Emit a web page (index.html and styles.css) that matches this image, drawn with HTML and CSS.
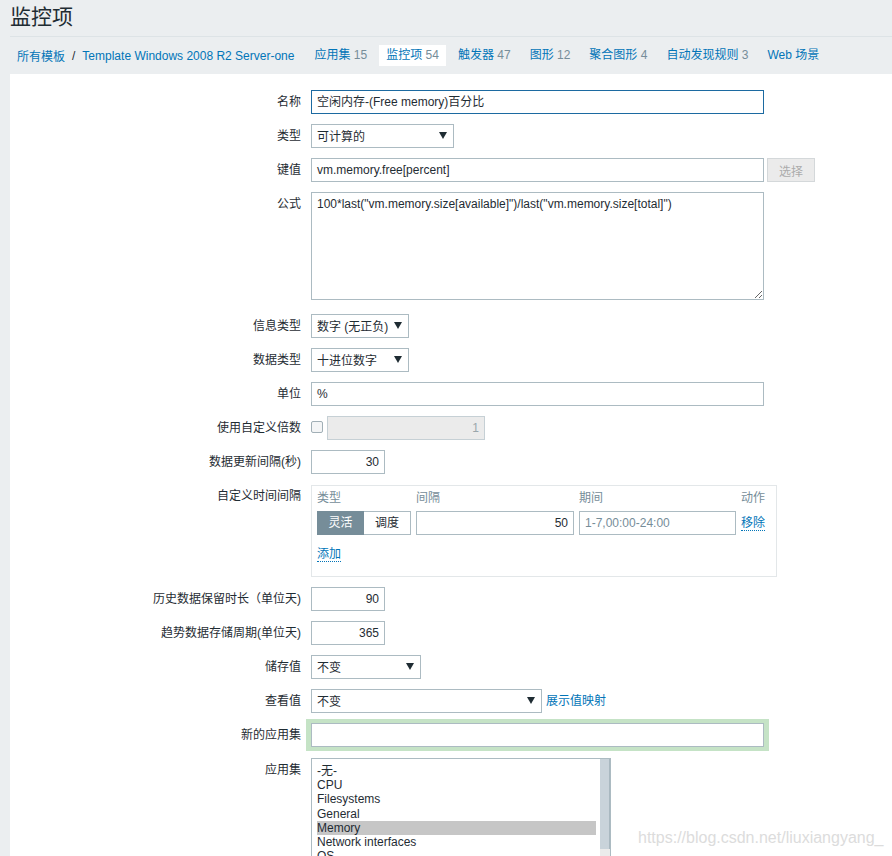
FILE: index.html
```html
<!DOCTYPE html>
<html lang="zh-CN">
<head>
<meta charset="utf-8">
<title>监控项</title>
<link rel="stylesheet" href="styles.css">
</head>
<body>
<div class="header">
  <h1 class="title">监控项</h1>
</div>
<div class="nav">
  <a class="link">所有模板</a><span class="sep">/</span><a class="link">Template Windows 2008 R2 Server-one</a>
  <ul class="tabs">
    <li><a class="link">应用集</a> <span class="count">15</span></li>
    <li class="active"><a class="link">监控项</a> <span class="count">54</span></li>
    <li><a class="link">触发器</a> <span class="count">47</span></li>
    <li><a class="link">图形</a> <span class="count">12</span></li>
    <li><a class="link">聚合图形</a> <span class="count">4</span></li>
    <li><a class="link">自动发现规则</a> <span class="count">3</span></li>
    <li><a class="link">Web 场景</a></li>
  </ul>
</div>
<div class="panel">
  <div class="form">
    <div class="row">
      <label class="lbl">名称</label>
      <div class="field"><div class="input wide focus">空闲内存-(Free memory)百分比</div></div>
    </div>
    <div class="row">
      <label class="lbl">类型</label>
      <div class="field"><div class="select w143"><span>可计算的</span><svg class="arrow" width="8" height="7" viewBox="0 0 8 7"><polygon points="0,0 8,0 4,7" fill="#1f2c33"/></svg></div></div>
    </div>
    <div class="row">
      <label class="lbl">键值</label>
      <div class="field"><div class="input wide">vm.memory.free[percent]</div><button class="btn-disabled">选择</button></div>
    </div>
    <div class="row">
      <label class="lbl">公式</label>
      <div class="field"><textarea class="textarea">100*last("vm.memory.size[available]")/last("vm.memory.size[total]")</textarea></div>
    </div>
    <div class="row">
      <label class="lbl">信息类型</label>
      <div class="field"><div class="select w98"><span>数字 (无正负)</span><svg class="arrow" width="8" height="7" viewBox="0 0 8 7"><polygon points="0,0 8,0 4,7" fill="#1f2c33"/></svg></div></div>
    </div>
    <div class="row">
      <label class="lbl">数据类型</label>
      <div class="field"><div class="select w98"><span>十进位数字</span><svg class="arrow" width="8" height="7" viewBox="0 0 8 7"><polygon points="0,0 8,0 4,7" fill="#1f2c33"/></svg></div></div>
    </div>
    <div class="row">
      <label class="lbl">单位</label>
      <div class="field"><div class="input wide">%</div></div>
    </div>
    <div class="row">
      <label class="lbl">使用自定义倍数</label>
      <div class="field"><span class="checkbox"></span><div class="input disabled num w158">1</div></div>
    </div>
    <div class="row">
      <label class="lbl">数据更新间隔(秒)</label>
      <div class="field"><div class="input num w74">30</div></div>
    </div>
    <div class="row row-box">
      <label class="lbl">自定义时间间隔</label>
      <div class="field">
        <div class="intervals">
          <div class="int-grid">
            <span class="th">类型</span><span class="th">间隔</span><span class="th">期间</span><span class="th">动作</span>
            <div class="seg"><span class="seg-on">灵活</span><span class="seg-off">调度</span></div>
            <div class="input num">50</div>
            <div class="input">1-7,00:00-24:00</div>
            <a class="link dotted">移除</a>
          </div>
          <a class="link dotted add">添加</a>
        </div>
      </div>
    </div>
    <div class="row">
      <label class="lbl">历史数据保留时长（单位天)</label>
      <div class="field"><div class="input num w74">90</div></div>
    </div>
    <div class="row">
      <label class="lbl">趋势数据存储周期(单位天)</label>
      <div class="field"><div class="input num w74">365</div></div>
    </div>
    <div class="row">
      <label class="lbl">储存值</label>
      <div class="field"><div class="select w110"><span>不变</span><svg class="arrow" width="8" height="7" viewBox="0 0 8 7"><polygon points="0,0 8,0 4,7" fill="#1f2c33"/></svg></div></div>
    </div>
    <div class="row">
      <label class="lbl">查看值</label>
      <div class="field"><div class="select w231"><span>不变</span><svg class="arrow" width="8" height="7" viewBox="0 0 8 7"><polygon points="0,0 8,0 4,7" fill="#1f2c33"/></svg></div><a class="link map-link">展示值映射</a></div>
    </div>
    <div class="row">
      <label class="lbl">新的应用集</label>
      <div class="field"><div class="highlight"><div class="input wide"></div></div></div>
    </div>
    <div class="row">
      <label class="lbl">应用集</label>
      <div class="field">
        <div class="listbox">
          <ul class="options">
            <li>-无-</li>
            <li>CPU</li>
            <li>Filesystems</li>
            <li>General</li>
            <li class="selected">Memory</li>
            <li>Network interfaces</li>
            <li>OS</li>
            <li>Processes</li>
          </ul>
          <div class="scrollbar"><div class="thumb"></div></div>
        </div>
      </div>
    </div>
  </div>
</div>
<div class="watermark">https://blog.csdn.net/liuxiangyang_</div>
</body>
</html>
```
FILE: styles.css
```css
html, body {
  margin: 0;
  padding: 0;
}
body {
  background: #ebeef0;
  font-family: "Liberation Sans", "Noto Sans CJK SC", sans-serif;
  font-size: 12px;
  color: #1f2c33;
  overflow: hidden;
  height: 856px;
  position: relative;
}
.header {
  padding: 0 0 0 10px;
}
.title {
  margin: 0;
  font-weight: normal;
  font-size: 21px;
  line-height: 28px;
  padding: 3px 0 5px 0;
  border-bottom: 1px solid #dde3e6;
  color: #1f2c33;
}
.nav {
  display: flex;
  align-items: center;
  height: 37px;
  padding-left: 17px;
  white-space: nowrap;
}
.link {
  color: #0275b8;
  text-decoration: none;
  cursor: pointer;
}
.sep {
  margin: 0 7px 0 7px;
  color: #1f2c33;
}
.tabs {
  display: flex;
  list-style: none;
  margin: 0 0 0 10px;
  padding: 0;
}
.tabs li {
  padding: 0 7px;
  margin: 0 2px 0 3px;
  line-height: 21px;
}
.tabs li.active {
  background: #ffffff;
}
.count {
  color: #768d99;
}
.panel {
  background: #ffffff;
  margin-left: 10px;
  padding-top: 16px;
  min-height: 800px;
}
.form {
  display: flex;
  flex-direction: column;
  gap: 10px;
}
.row {
  display: flex;
  align-items: flex-start;
}
.lbl {
  width: 291px;
  margin-right: 10px;
  text-align: right;
  line-height: 14px;
  padding-top: 5px;
  white-space: nowrap;
  flex: none;
}
.field {
  display: flex;
  align-items: flex-start;
}
.input {
  box-sizing: border-box;
  height: 24px;
  border: 1px solid #acbbc2;
  padding: 0 5px;
  line-height: 22px;
  background: #ffffff;
  white-space: nowrap;
  overflow: hidden;
}
.input.focus {
  border-color: #1c6aa1;
}
.wide {
  width: 453px;
}
.w74 { width: 74px; }
.w158 { width: 158px; }
.num {
  text-align: right;
}
.input.disabled {
  background: #ebebeb;
  border-color: #c6d0d5;
  color: #9aa6ac;
  margin-left: 4px;
}
.select {
  box-sizing: border-box;
  height: 24px;
  border: 1px solid #acbbc2;
  padding: 0 6px 0 5px;
  line-height: 22px;
  display: flex;
  align-items: center;
  justify-content: space-between;
  background: #ffffff;
  white-space: nowrap;
}
.select span {
  line-height: 22px;
  padding-top: 2px;
}
.arrow {
  flex: none;
  margin-top: -2px;
}
.w143 { width: 143px; }
.w98 { width: 98px; }
.w110 { width: 110px; }
.w231 { width: 231px; }
.btn-disabled {
  box-sizing: border-box;
  width: 48px;
  height: 24px;
  margin-left: 3px;
  border: 1px solid #d4d8da;
  background: #ebebeb;
  color: #acacac;
  font-family: inherit;
  font-size: 12px;
  padding: 0;
}
.textarea {
  box-sizing: border-box;
  width: 453px;
  height: 108px;
  border: 1px solid #acbbc2;
  padding: 3px 5px;
  font-family: inherit;
  font-size: 12px;
  line-height: 16px;
  color: #1f2c33;
  margin: 0 0 4px 0;
  display: block;
  resize: both;
}
.checkbox {
  box-sizing: border-box;
  width: 12px;
  height: 12px;
  border: 1px solid #a1afb6;
  border-radius: 2px;
  background: #f4f5f6;
  margin-top: 5px;
  flex: none;
}
.intervals {
  box-sizing: border-box;
  width: 466px;
  height: 92px;
  border: 1px solid #e3e7e9;
  padding: 5px 5px 0 5px;
  margin-top: 1px;
}
.int-grid {
  display: grid;
  grid-template-columns: 94px 158px 157px auto;
  column-gap: 5px;
  row-gap: 6px;
  align-items: start;
}
.th {
  color: #768d99;
  line-height: 14px;
}
.seg {
  display: flex;
  height: 24px;
}
.seg span {
  box-sizing: border-box;
  width: 47px;
  height: 24px;
  line-height: 22px;
  text-align: center;
}
.seg-on {
  background: #768d99;
  color: #ffffff;
  border: 1px solid #768d99;
}
.seg-off {
  background: #ffffff;
  border: 1px solid #acbbc2;
  border-left: none;
}
.int-grid .input {
  color: #768d99;
}
.int-grid .input.num {
  color: #1f2c33;
}
.dotted {
  border-bottom: 1px dotted #0275b8;
  line-height: 14px;
  align-self: start;
  justify-self: start;
  margin-top: 5px;
}
.add {
  display: inline-block;
  margin-top: 12px;
}
.map-link {
  margin-left: 4px;
  line-height: 14px;
  padding-top: 5px;
}
.highlight {
  background: #c5e3c6;
  padding: 4px 5px;
  margin: -4px -5px -3px -5px;
}
.listbox {
  box-sizing: border-box;
  width: 300px;
  height: 120px;
  border: 1px solid #acbbc2;
  display: flex;
  background: #ffffff;
}
.options {
  list-style: none;
  margin: 0;
  padding: 5px 4px 0 5px;
  flex: 1;
}
.options li {
  line-height: 14.2px;
  height: 14.2px;
  white-space: nowrap;
}
.options li.selected {
  background: #c6c6c6;
}
.scrollbar {
  width: 10px;
  background: #ebebeb;
  flex: none;
}
.thumb {
  height: 90px;
  background: #c9d3da;
  border-right: 1px solid #a9b8c0;
  box-sizing: border-box;
}
.watermark {
  position: absolute;
  left: 638px;
  top: 829px;
  font-size: 16px;
  line-height: 18px;
  color: #dcdcdc;
  white-space: nowrap;
}
```
